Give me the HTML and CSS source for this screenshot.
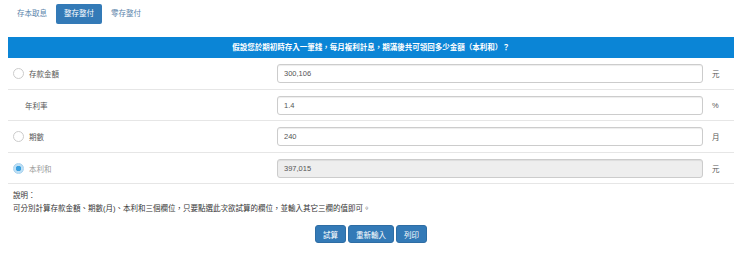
FILE: index.html
```html
<!DOCTYPE html>
<html lang="zh-Hant">
  <head>
    <meta charset="UTF-8" />
    <title>整存整付</title>
    <link rel="stylesheet" href="styles.css">
  </head>
  <body>
    <ul class="tabs">
      <li>存本取息</li>
      <li class="active">整存整付</li>
      <li>零存整付</li>
    </ul>

    <div class="banner">假設您於期初時存入一筆錢，每月複利計息，期滿後共可領回多少金額（本利和）？</div>

    <div class="calc">
      <div class="row">
        <label class="name"><span class="radio"></span>存款金額</label>
        <div class="field"><input type="text" value="300,106" /></div>
        <div class="unit">元</div>
      </div>
      <div class="row">
        <label class="name plain">年利率</label>
        <div class="field"><input type="text" value="1.4" /></div>
        <div class="unit">%</div>
      </div>
      <div class="row">
        <label class="name"><span class="radio"></span>期數</label>
        <div class="field"><input type="text" value="240" /></div>
        <div class="unit">月</div>
      </div>
      <div class="row picked">
        <label class="name"><span class="radio on"></span>本利和</label>
        <div class="field"><input type="text" value="397,015" readonly /></div>
        <div class="unit">元</div>
      </div>
    </div>

    <div class="note">
      <p>說明：</p>
      <p>可分別計算存款金額、期數(月)、本利和三個欄位，只要點選此次欲試算的欄位，並輸入其它三欄的值即可。</p>
    </div>

    <div class="actions">
      <button>試算</button>
      <button>重新輸入</button>
      <button>列印</button>
    </div>
  </body>
</html>
```

FILE: styles.css
```css
html {
  font-family: "Liberation Sans", "Noto Sans CJK TC", sans-serif;
  font-size: 7.5px;
  background: #ffffff;
  color: #555555;
}

body {
  margin: 0;
  padding: 0 6px 0 8px;
}

/* tabs */
.tabs {
  display: flex;
  gap: 1px;
  list-style: none;
  margin: 4px 0 0 1px;
  padding: 0;
}
.tabs li {
  height: 20px;
  line-height: 20px;
  padding: 0 8px;
  border-radius: 2px;
  color: #5b84ab;
}
.tabs li.active {
  background: #337ab7;
  color: #ffffff;
}

.banner {
  margin-top: 13px;
  height: 21px;
  line-height: 21px;
  background: #0b85d6;
  color: #ffffff;
  font-weight: bold;
  text-align: center;
}

/* rows */
.row {
  display: grid;
  grid-template-columns: 262px 1fr 31px;
  align-items: center;
  padding: 6px 0 5.5px;
  border-bottom: 1px solid #e6e6e6;
}
.name {
  display: flex;
  align-items: center;
  gap: 5px;
  padding-left: 5px;
}
.name.plain {
  padding-left: 17px;
}
.picked .name {
  color: #999999;
}
.radio {
  width: 9px;
  height: 9px;
  border: 1px solid #cccccc;
  border-radius: 50%;
  box-sizing: content-box;
}
.radio.on {
  background: radial-gradient(circle, #3aa0e0 0 2.5px, #bfe0f5 3px);
  border-color: #a9d3ef;
}
.field {
  padding-left: 7px;
}
.field input {
  display: block;
  width: 100%;
  height: 19px;
  box-sizing: border-box;
  padding: 0 6px;
  border: 1px solid #cccccc;
  border-radius: 3px;
  box-shadow: inset 0 1px 1px rgba(0, 0, 0, 0.075);
  font-family: inherit;
  font-size: 7.5px;
  color: #555555;
  background: #ffffff;
}
.field input[readonly] {
  background: #eeeeee;
}
.unit {
  padding-left: 9px;
}

/* note */
.note {
  padding: 5px 0 0 5px;
  color: #333333;
  line-height: 13px;
}
.note p {
  margin: 0;
}

.actions {
  display: flex;
  justify-content: center;
  gap: 2px;
  margin-top: 10px;
}
.actions button {
  height: 18px;
  padding: 0 7px;
  border: 1px solid #2e6da4;
  border-radius: 3px;
  background: #337ab7;
  color: #ffffff;
  font-family: inherit;
  font-size: 7.5px;
}
```
